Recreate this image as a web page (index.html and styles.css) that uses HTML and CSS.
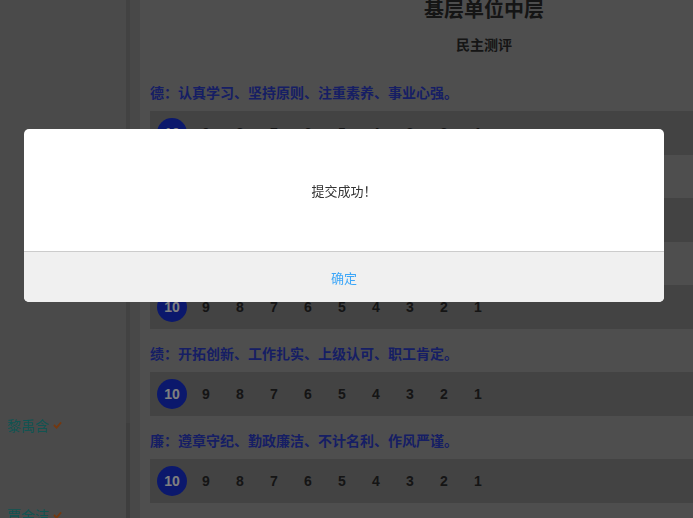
FILE: index.html
```html
<!DOCTYPE html>
<html lang="zh-CN">
<head>
<meta charset="utf-8">
<title>民主测评</title>
<link rel="stylesheet" href="styles.css">
</head>
<body>
<div class="page">
  <aside class="sidebar">
    <ul class="people">
      <li class="person"><span class="person-name">黎禹含</span><svg class="tick" viewBox="0 0 10 8" width="9" height="8"><polyline points="1,4 4,7 9,1" fill="none" stroke="#e8701f" stroke-width="2"/></svg></li>
      <li class="person"><span class="person-name">覃金洁</span><svg class="tick" viewBox="0 0 10 8" width="9" height="8"><polyline points="1,4 4,7 9,1" fill="none" stroke="#e8701f" stroke-width="2"/></svg></li>
    </ul>
  </aside>
  <div class="scrollbar"><div class="scroll-thumb"></div></div>
  <main class="main">
    <h1 class="title">基层单位中层</h1>
    <h2 class="subtitle">民主测评</h2>

    <section class="item">
      <h3 class="item-head">德：认真学习、坚持原则、注重素养、事业心强。</h3>
      <div class="scores"><span class="score on">10</span><span class="score">9</span><span class="score">8</span><span class="score">7</span><span class="score">6</span><span class="score">5</span><span class="score">4</span><span class="score">3</span><span class="score">2</span><span class="score">1</span></div>
    </section>
    <section class="item">
      <h3 class="item-head">能：业务精通、善于管理、勇于创新、工作高效。</h3>
      <div class="scores"><span class="score on">10</span><span class="score">9</span><span class="score">8</span><span class="score">7</span><span class="score">6</span><span class="score">5</span><span class="score">4</span><span class="score">3</span><span class="score">2</span><span class="score">1</span></div>
    </section>
    <section class="item">
      <h3 class="item-head">勤：爱岗敬业、勤奋工作、任劳任怨、服务热情。</h3>
      <div class="scores"><span class="score on">10</span><span class="score">9</span><span class="score">8</span><span class="score">7</span><span class="score">6</span><span class="score">5</span><span class="score">4</span><span class="score">3</span><span class="score">2</span><span class="score">1</span></div>
    </section>
    <section class="item">
      <h3 class="item-head">绩：开拓创新、工作扎实、上级认可、职工肯定。</h3>
      <div class="scores"><span class="score on">10</span><span class="score">9</span><span class="score">8</span><span class="score">7</span><span class="score">6</span><span class="score">5</span><span class="score">4</span><span class="score">3</span><span class="score">2</span><span class="score">1</span></div>
    </section>
    <section class="item">
      <h3 class="item-head">廉：遵章守纪、勤政廉洁、不计名利、作风严谨。</h3>
      <div class="scores"><span class="score on">10</span><span class="score">9</span><span class="score">8</span><span class="score">7</span><span class="score">6</span><span class="score">5</span><span class="score">4</span><span class="score">3</span><span class="score">2</span><span class="score">1</span></div>
    </section>
  </main>
</div>

<div class="mask"></div>
<div class="dialog">
  <div class="dialog-body">提交成功！</div>
  <div class="dialog-foot"><span class="dialog-btn">确定</span></div>
</div>
</body>
</html>
```

FILE: styles.css
```css
html, body {
  margin: 0;
  padding: 0;
  height: 100%;
  overflow: hidden;
}
body {
  font-family: "Liberation Sans", "Noto Sans CJK SC", sans-serif;
  background: #9c9c9c;
}
.page {
  display: flex;
  width: 818px;
  min-height: 100%;
}
.sidebar {
  flex: 0 0 126px;
  background: #949494;
}
.people {
  list-style: none;
  margin: 0;
  padding: 415px 0 0 7px;
}
.person {
  display: flex;
  align-items: center;
  height: 20px;
  margin-bottom: 70px;
  font-family: "Noto Sans CJK SC", sans-serif;
  font-size: 14px;
  color: #22a8a4;
}
.tick {
  margin-left: 4px;
}
.scrollbar {
  flex: 0 0 4px;
  background: #7c7c7c;
  display: flex;
  flex-direction: column;
}
.scroll-thumb {
  height: 423px;
  background: #858585;
}
.main {
  flex: 1;
  border-left: 10px solid #909090;
  padding: 0 0 0 10px;
  background: #9c9c9c;
}
.title {
  margin: 0;
  height: 18px;
  text-align: center;
  font-family: "Noto Sans CJK SC", sans-serif;
  font-size: 20px;
  font-weight: bold;
  line-height: 18px;
  color: #2a2a2a;
}
.subtitle {
  margin: 16px 0 0;
  padding-bottom: 14px;
  height: 20px;
  text-align: center;
  font-family: "Noto Sans CJK SC", sans-serif;
  font-size: 14px;
  font-weight: bold;
  line-height: 20px;
  color: #2a2a2a;
}
.item-head {
  margin: 14px 0 9px;
  height: 20px;
  overflow: hidden;
  white-space: nowrap;
  font-family: "Noto Sans CJK SC", sans-serif;
  font-size: 14px;
  font-weight: bold;
  line-height: 20px;
  color: #2c3cc8;
}
.scores {
  display: flex;
  height: 44px;
  padding: 0 5px;
  background: #868686;
}
.score {
  width: 34px;
  display: flex;
  align-items: center;
  justify-content: center;
  font-family: "Liberation Sans", sans-serif;
  font-weight: bold;
  font-size: 14px;
  color: #2a2a2a;
}
.score.on {
  position: relative;
  color: #ffffff;
  z-index: 0;
}
.score.on::after {
  content: "";
  position: absolute;
  left: 2px;
  top: 7px;
  width: 30px;
  height: 30px;
  border-radius: 50%;
  background: #1630d8;
  z-index: -1;
}
.mask {
  position: fixed;
  inset: 0;
  background: rgba(0, 0, 0, 0.5);
}
.dialog {
  position: fixed;
  top: 129px;
  left: 24px;
  width: 640px;
  border-radius: 5px;
  overflow: hidden;
  background: #ffffff;
  font-family: "Noto Sans CJK SC", sans-serif;
  font-size: 13px;
}
.dialog-body {
  height: 122px;
  display: flex;
  align-items: center;
  justify-content: center;
  color: #333333;
  border-bottom: 1px solid #cccccc;
}
.dialog-foot {
  height: 50px;
  display: flex;
  align-items: center;
  justify-content: center;
  background: #f0f0f0;
}
.dialog-btn {
  color: #3ca6f8;
}
```
